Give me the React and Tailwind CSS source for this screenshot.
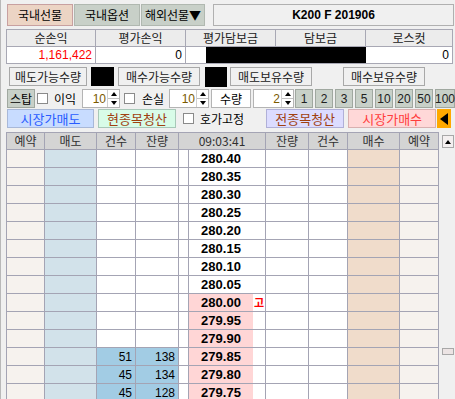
import React from 'react';

const kr = { fontFamily: '"Noto Sans CJK KR", "Liberation Sans", sans-serif' };
const num = { fontFamily: '"Liberation Sans", Arial, sans-serif' };

const prices = [
  '280.40', '280.35', '280.30', '280.25', '280.20', '280.15', '280.10',
  '280.05', '280.00', '279.95', '279.90', '279.85', '279.80', '279.75'
];
const bids = { 11: ['51', '138'], 12: ['45', '134'], 13: ['45', '128'] };

function Check({ className = '' }) {
  return <div className={`w-[11px] h-[11px] bg-white border border-[#8a8a8a] ${className}`} />;
}

function Spinner({ value, width }) {
  return (
    <div className="h-[19px] flex bg-white border border-[#b4b4b4]" style={{ width }}>
      <div className="flex-1 flex items-center justify-end pr-[1px] text-[12px] text-[#7a5a00]" style={num}>{value}</div>
      <div className="w-[12px] flex flex-col border-l border-[#d0d0d0]">
        <div className="flex-1 flex items-center justify-center">
          <div className="w-0 h-0 border-l-[3px] border-r-[3px] border-b-[4px] border-l-transparent border-r-transparent border-b-black" />
        </div>
        <div className="h-px bg-[#c0c0c0]" />
        <div className="flex-1 flex items-center justify-center">
          <div className="w-0 h-0 border-l-[3px] border-r-[3px] border-t-[4px] border-l-transparent border-r-transparent border-t-black" />
        </div>
      </div>
    </div>
  );
}

function Label({ children, w }) {
  return (
    <div className="h-[19px] flex items-center justify-center border border-[#a8a8a8] bg-[#f0f0f0] text-[12px] text-[#202020]" style={{ ...kr, width: w }}>
      {children}
    </div>
  );
}

export default function App() {
  const head = ['순손익', '평가손익', '평가담보금', '담보금', '로스컷'];
  const widths = [88, 89, 89, 89, 86];

  return (
    <div className="w-[455px] h-[399px] overflow-hidden bg-[#f0f0f0] pt-[4px] relative border-l border-[#b8b8b8]" style={kr}>
      {/* tabs */}
      <div className="flex h-[22px] pl-[6px]">
        <div className="w-[66px] flex items-center justify-center bg-[#ecd4c4] border border-[#c8a0a0] text-[12px] text-black">국내선물</div>
        <div className="w-[66px] flex items-center justify-center bg-[#c8d0c8] border border-[#b0b8b0] text-[12px] text-black ml-px">국내옵션</div>
        <div className="w-[64px] flex items-center justify-center bg-[#c8d0c8] border border-[#b0b8b0] text-[12px] text-black ml-px">해외선물▼</div>
        <div className="w-[241px] ml-[8px] flex items-center justify-center bg-[#f0f0f0] border border-[#b0b0b0] text-[12px] font-bold text-black" style={num}>K200 F 201906</div>
      </div>

      {/* summary table */}
      <div className="mt-[3px] ml-[5px] w-[447px] grid grid-cols-[88px_89px_89px_89px_86px] gap-px bg-[#a8a8b4] p-px">
        {head.map((h) => (
          <div key={h} className="h-[16px] bg-[#ececec] flex items-center justify-center text-[12px] text-[#202020]">{h}</div>
        ))}
        <div className="h-[16px] bg-white flex items-center justify-end pr-[3px] text-[12px] text-[#ff0000]" style={num}>1,161,422</div>
        <div className="h-[16px] bg-white flex items-center justify-end pr-[3px] text-[12px] text-black" style={num}>0</div>
        <div className="h-[16px] bg-white flex justify-end"><div className="w-[69px] bg-black" /></div>
        <div className="h-[16px] bg-black mr-[-1px] ml-[-1px]" />
        <div className="h-[16px] bg-white flex items-center justify-end pr-[3px] text-[12px] text-black" style={num}>0</div>
      </div>

      {/* possible quantities */}
      <div className="mt-[3px] flex items-center h-[19px] pl-[8px]">
        <Label w={78}>매도가능수량</Label>
        <div className="w-[23px] h-[19px] bg-black ml-[4px]" />
        <div className="ml-[4px]"><Label w={82}>매수가능수량</Label></div>
        <div className="w-[22px] h-[20px] bg-black ml-[5px]" />
        <div className="ml-[3px]"><Label w={82}>매도보유수량</Label></div>
        <div className="w-[31px]" />
        <Label w={82}>매수보유수량</Label>
      </div>

      {/* stop row */}
      <div className="mt-[3px] flex items-center h-[19px] pl-[6px]">
        <div className="w-[28px] h-[19px] flex items-center justify-center bg-[#c8d0c8] border border-[#a0a8a0] text-[12px]">스탑</div>
        <Check className="ml-[2px]" />
        <div className="ml-[6px] w-[28px] text-[12px] text-black">이익</div>
        <Spinner value="10" width={38} />
        <Check className="ml-[4px]" />
        <div className="ml-[7px] w-[27px] text-[12px] text-black">손실</div>
        <Spinner value="10" width={40} />
        <div className="ml-[2px] w-[40px] h-[19px] flex items-center justify-center bg-white border border-[#b4b4b4] text-[12px]">수량</div>
        <div className="ml-[2px]"><Spinner value="2" width={41} /></div>
        <div className="ml-[1px] flex gap-[2px]">
          {['1', '2', '3', '5', '10', '20', '50', '100'].map((b, i) => (
            <div key={b} className="h-[19px] flex items-center justify-center bg-[#c8d0c8] border border-[#a0a8a0] text-[12px] text-[#202020]" style={{ ...num, width: i === 7 ? 20 : 18 }}>{b}</div>
          ))}
        </div>
      </div>

      {/* order buttons */}
      <div className="mt-[1px] flex items-center h-[19px] pl-[6px]">
        <div className="w-[87px] h-[19px] flex items-center justify-center bg-[#c8dcff] border border-[#a8b8d8] text-[13px] text-[#2a5cff]">시장가매도</div>
        <div className="ml-[4px] w-[78px] h-[19px] flex items-center justify-center bg-[#d8fce8] border border-[#a8c8b8] text-[13px] text-[#a04010]">현종목청산</div>
        <Check className="ml-[7px]" />
        <div className="ml-[6px] text-[12px] text-black">호가고정</div>
        <div className="ml-[22px] w-[78px] h-[19px] flex items-center justify-center bg-[#dcdcff] border border-[#b0b0d8] text-[13px] text-[#a04010]">전종목청산</div>
        <div className="ml-[4px] w-[88px] h-[19px] flex items-center justify-center bg-[#ffd8d8] border border-[#d8b0b0] text-[13px] text-[#ff3c3c]">시장가매수</div>
        <div className="ml-[1px] w-[14px] h-[19px] flex items-center justify-center bg-[#ffa800]">
          <div className="w-0 h-0 border-t-[6px] border-b-[6px] border-r-[8px] border-t-transparent border-b-transparent border-r-black" />
        </div>
      </div>

      {/* order book */}
      <div className="mt-[4px] flex">
        <div className="ml-[5px] w-[433px] grid grid-cols-[37px_51px_38px_42px_9px_76px_42px_38px_51px_38px] gap-px bg-[#a4a4b4] p-px">
          {['예약', '매도', '건수', '잔량'].map((h) => (
            <div key={h} className="h-[16px] bg-[#d4d4d4] flex items-center justify-center text-[12px] text-[#303030]">{h}</div>
          ))}
          <div className="col-span-2 h-[16px] bg-[#d4d4d4] flex items-center justify-center text-[12px] text-[#303030]">09:03:41</div>
          {['잔량', '건수', '매수', '예약'].map((h, i) => (
            <div key={h + i} className="h-[16px] bg-[#d4d4d4] flex items-center justify-center text-[12px] text-[#303030]">{h}</div>
          ))}
          {prices.map((p, i) => {
            const pink = i >= 8;
            const b = bids[i];
            return (
              <React.Fragment key={p}>
                <div className="h-[17px] bg-[#f6f2ee]" />
                <div className="h-[17px] bg-[#d2e2ea]" />
                <div className={`h-[17px] flex items-center justify-end pr-[3px] text-[12px] text-black ${b ? 'bg-[#a2cce4]' : 'bg-white'}`} style={num}>{b ? b[0] : ''}</div>
                <div className={`h-[17px] flex items-center justify-end pr-[3px] text-[12px] text-black ${b ? 'bg-[#a2cce4]' : 'bg-white'}`} style={num}>{b ? b[1] : ''}</div>
                <div className="h-[17px] bg-white" />
                <div className="h-[17px] bg-white flex">
                  <div className={`w-[64px] flex items-center justify-center text-[13px] font-bold text-black ${pink ? 'bg-[#ffd6d6]' : 'bg-white'}`} style={num}>{p}</div>
                  <div className="flex-1 flex items-center justify-center text-[11px] font-bold text-[#ff0000]">{i === 8 ? '고' : ''}</div>
                </div>
                <div className="h-[17px] bg-white" />
                <div className="h-[17px] bg-white" />
                <div className="h-[17px] bg-[#f0dccb]" />
                <div className="h-[17px] bg-[#f6f2ee]" />
              </React.Fragment>
            );
          })}
        </div>
        {/* scrollbar */}
        <div className="flex-1 relative">
          <div className="absolute left-[3px] top-[3px] w-[12px] h-[13px] bg-[#f4f0f0] border border-[#a8a8a8] flex items-center justify-center">
            <div className="w-0 h-0 border-l-[3px] border-r-[3px] border-b-[4px] border-l-transparent border-r-transparent border-b-black" />
          </div>
          <div className="absolute left-[3px] top-[216px] w-[12px] h-[7px] bg-[#ece4e4] border border-[#a8a8a8]" />
        </div>
      </div>
    </div>
  );
}
